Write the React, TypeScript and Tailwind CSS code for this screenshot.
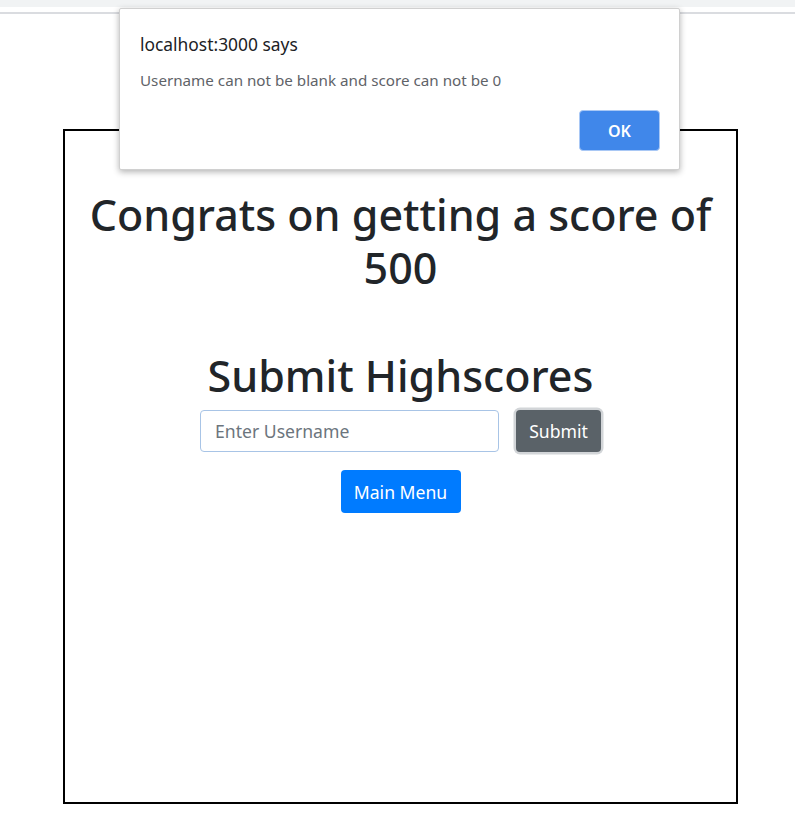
import React from "react";

// score screen with a browser alert on top
export default function App() {
  return (
    <div className="relative min-h-[818px] bg-white font-['Noto_Sans',sans-serif] text-[#212529]">
      {/* browser strip */}
      <div className="h-[7px] bg-[#f1f3f4]" />
      <div className="h-[5px] bg-white" />
      <div className="h-[2px] bg-[#dadce0]" />

      <div className="pl-[63px] pt-[115px]">
        <div className="flex h-[675px] w-[675px] flex-col items-center border-2 border-black px-4 pt-[58px] text-center">
          <h1 className="text-[43px] leading-[52.8px] font-medium">Congrats on getting a score of 500</h1>
          <h1 className="mt-[55px] mb-[8px] text-[43px] leading-[52.8px] font-medium">Submit Highscores</h1>
          <form className="flex items-center gap-[17px]" onSubmit={(e) => e.preventDefault()}>
            <input
              type="text"
              placeholder="Enter Username"
              className="h-[42px] w-[299px] rounded-[4px] border border-[#a8c4e6] px-[14px] text-[17.6px] text-[#495057] placeholder:text-[#6c757d] outline-none"
            />
            <button
              type="submit"
              className="h-[42px] w-[85px] rounded-[4px] bg-[#5a6268] text-[17.6px] text-white ring-[2.5px] ring-[#d2d5d8]"
            >
              Submit
            </button>
          </form>
          <button className="mt-[18px] h-[43px] w-[120px] rounded-[4px] bg-[#007bff] text-[17.6px] text-white">
            Main Menu
          </button>
        </div>
      </div>

      {/* alert dialog */}
      <div className="absolute left-[119px] top-[8px] flex h-[162px] w-[561px] flex-col rounded-[2px] border border-[#d0d0d0] bg-white px-[20px] pt-[22px] shadow-[0_2px_6px_rgba(0,0,0,0.3)]">
        <div className="text-[17.4px] text-[#202124]">localhost:3000 says</div>
        <div className="mt-[12px] text-[15.2px] text-[#5f6368]">Username can not be blank and score can not be 0</div>
        <div className="mt-auto mb-[18px] flex justify-end">
          <button className="mr-[-1px] h-[41px] w-[81px] rounded-[4px] border border-[#a9c8f5] bg-[#4087ea] text-[16px] font-semibold text-white">
            OK
          </button>
        </div>
      </div>
    </div>
  );
}
